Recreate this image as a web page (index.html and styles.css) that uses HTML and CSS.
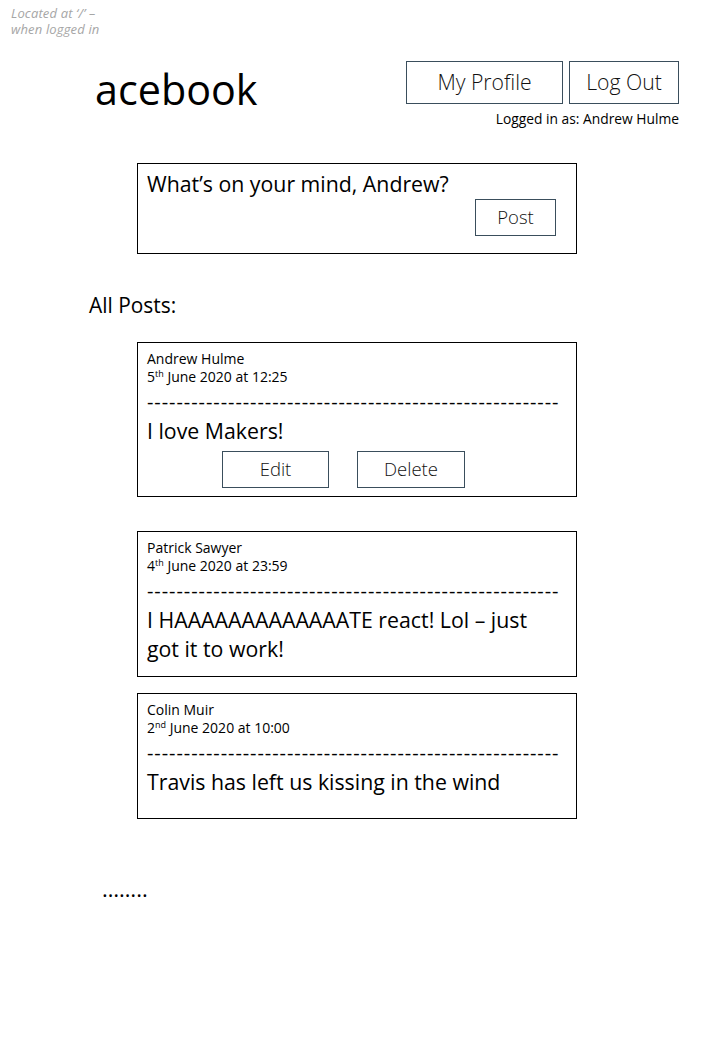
FILE: index.html
```html
<!DOCTYPE html>
<html lang="en">
<head>
<meta charset="utf-8">
<title>acebook</title>
<link rel="stylesheet" href="styles.css">
</head>
<body>
<div class="page">
  <p class="note">Located at ‘/’ –<br>when logged in</p>

  <header class="topbar">
    <div class="logo">acebook</div>
    <div class="account">
      <div class="actions">
        <button class="btn btn-lg btn-profile">My Profile</button>
        <button class="btn btn-lg btn-logout">Log Out</button>
      </div>
      <div class="logged">Logged in as: Andrew Hulme</div>
    </div>
  </header>

  <section class="composer">
    <div class="prompt">What’s on your mind, Andrew?</div>
    <button class="btn btn-sm btn-post">Post</button>
  </section>

  <h2 class="section-title">All Posts:</h2>

  <article class="card card-first">
    <div class="meta">Andrew Hulme</div>
    <div class="meta">5<sup>th</sup> June 2020 at 12:25</div>
    <div class="dashes">--------------------------------------------------------</div>
    <div class="body">I love Makers!</div>
    <div class="card-actions">
      <button class="btn btn-sm btn-edit">Edit</button>
      <button class="btn btn-sm btn-delete">Delete</button>
    </div>
  </article>

  <article class="card card-second">
    <div class="meta">Patrick Sawyer</div>
    <div class="meta">4<sup>th</sup> June 2020 at 23:59</div>
    <div class="dashes">--------------------------------------------------------</div>
    <div class="body">I HAAAAAAAAAAAAATE react! Lol – just<br>got it to work!</div>
  </article>

  <article class="card card-third">
    <div class="meta">Colin Muir</div>
    <div class="meta">2<sup>nd</sup> June 2020 at 10:00</div>
    <div class="dashes">--------------------------------------------------------</div>
    <div class="body">Travis has left us kissing in the wind</div>
  </article>

  <div class="more">……..</div>
</div>
</body>
</html>
```

FILE: styles.css
```css
* {
  box-sizing: border-box;
}

html, body {
  margin: 0;
  padding: 0;
  background: #ffffff;
}

body {
  font-family: "Open Sans", "Noto Sans", "Liberation Sans", sans-serif;
  color: #000000;
}

.page {
  width: 720px;
  height: 1040px;
  overflow: hidden;
}

.note {
  margin: 0;
  padding: 5px 0 0 11px;
  font-size: 13px;
  line-height: 16px;
  letter-spacing: 0.15px;
  font-style: italic;
  color: #a6a6a6;
}

.topbar {
  display: flex;
  justify-content: space-between;
  align-items: flex-start;
  margin-top: 24px;
  padding: 0 41px 0 95px;
}

.logo {
  margin-top: 6px;
  font-size: 41.3px;
  line-height: 44px;
}

.account {
  display: flex;
  flex-direction: column;
  align-items: flex-end;
}

.actions {
  display: flex;
  gap: 6px;
}

.btn {
  display: flex;
  align-items: center;
  justify-content: center;
  margin: 0;
  padding: 0 0 2px;
  background: #ffffff;
  border: 1px solid #3a4e5c;
  border-radius: 0;
  font-family: inherit;
  font-weight: 300;
  color: #111111;
}

.btn-lg {
  height: 43px;
  font-size: 21.2px;
}

.btn-profile {
  width: 157px;
}

.btn-logout {
  width: 110px;
}

.btn-sm {
  height: 37px;
  font-size: 18.5px;
}

.logged {
  margin-top: 6px;
  font-size: 13.8px;
  line-height: 18px;
}

.composer {
  display: flex;
  flex-direction: column;
  width: 440px;
  height: 91px;
  margin: 35px 0 0 137px;
  padding: 8px 20px 0 9px;
  border: 1px solid #000000;
}

.prompt {
  font-size: 21.3px;
  line-height: 24px;
}

.btn-post {
  align-self: flex-end;
  width: 81px;
  margin-top: 3px;
}

.section-title {
  margin: 39px 0 0 89px;
  font-size: 20.9px;
  line-height: 24px;
  font-weight: 400;
}

.card {
  width: 440px;
  margin-left: 137px;
  padding: 7px 9px 8px;
  border: 1px solid #000000;
}

.card-first {
  margin-top: 25px;
}

.card-second {
  margin-top: 34px;
  padding-bottom: 13px;
}

.card-third {
  margin-top: 16px;
  padding-bottom: 22px;
}

.meta {
  font-size: 14px;
  line-height: 18px;
}

.meta sup {
  font-size: 9px;
  line-height: 0;
  vertical-align: 5px;
}

.dashes {
  height: 20px;
  margin-top: 6px;
  font-size: 20px;
  line-height: 20px;
  letter-spacing: 0.93px;
  white-space: nowrap;
}

.body {
  margin-top: 4px;
  font-size: 21.3px;
  line-height: 29px;
}

.card-actions {
  display: flex;
  gap: 28px;
  margin-top: 6px;
  padding-left: 75px;
}

.btn-edit {
  width: 107px;
}

.btn-delete {
  width: 108px;
}

.more {
  margin: 57px 0 0 102px;
  font-size: 22px;
  line-height: 24px;
}
```
